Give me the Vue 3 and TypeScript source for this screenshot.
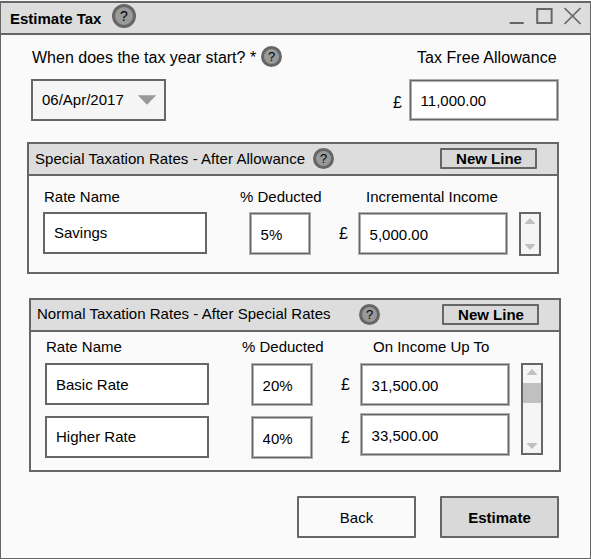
<script setup lang="ts">
import { reactive } from 'vue'

interface RateRow {
  name: string
  percent: string
  amount: string
}

interface RatePanel {
  id: string
  title: string
  amountLabel: string
  rows: RateRow[]
}

const form = reactive({ start: '06/Apr/2017', allowance: '11,000.00' })

const panels = reactive<RatePanel[]>([
  {
    id: 'special',
    title: 'Special Taxation Rates - After Allowance',
    amountLabel: 'Incremental Income',
    rows: [{ name: 'Savings', percent: '5%', amount: '5,000.00' }],
  },
  {
    id: 'normal',
    title: 'Normal Taxation Rates - After Special Rates',
    amountLabel: 'On Income Up To',
    rows: [
      { name: 'Basic Rate', percent: '20%', amount: '31,500.00' },
      { name: 'Higher Rate', percent: '40%', amount: '33,500.00' },
    ],
  },
])

function addLine(panel: RatePanel): void {
  panel.rows.push({ name: '', percent: '', amount: '' })
}
</script>

<template>
  <div class="window">
    <header class="titlebar">
      <h1>Estimate Tax</h1>
      <span class="help large">?</span>
      <svg class="controls" width="74" height="22" viewBox="0 0 74 22">
        <path d="M1.7 19H15.7" />
        <path d="M29.2 5H43.6V19H29.2Z" />
        <path d="M56.5 4L72.5 20M72.5 4L56.5 20" class="thin" />
      </svg>
    </header>

    <main>
      <div class="top-labels">
        <span>When does the tax year start? *</span>
        <span class="help">?</span>
        <span class="allowance-label">Tax Free Allowance</span>
      </div>

      <div class="top-fields">
        <button class="select">
          <span>{{ form.start }}</span>
          <svg width="20" height="10" viewBox="0 0 20 10"><path d="M0.8 0.2H19.2L10 9.8Z" fill="#999" /></svg>
        </button>
        <span class="pound">£</span>
        <input v-model="form.allowance" class="field soft" />
      </div>

      <section v-for="panel in panels" :key="panel.id" class="panel" :class="panel.id">
        <div class="panel-head">
          <h2>{{ panel.title }}</h2>
          <span class="help">?</span>
          <button class="new-line" @click="addLine(panel)">New Line</button>
        </div>
        <div class="column-labels">
          <span>Rate Name</span>
          <span>% Deducted</span>
          <span>{{ panel.amountLabel }}</span>
        </div>
        <div class="table">
          <div class="rows">
            <div v-for="(row, i) in panel.rows" :key="i" class="row">
              <input v-model="row.name" class="field name" />
              <input v-model="row.percent" class="field soft percent" />
              <span class="pound">£</span>
              <input v-model="row.amount" class="field soft amount" />
            </div>
          </div>
          <div class="scrollbar">
            <svg width="10" height="6" viewBox="0 0 10 6"><path d="M0 6V5.2L5 0L10 5.2V6Z" fill="#c0c0c0" /></svg>
            <div v-if="panel.rows.length > 1" class="thumb"></div>
            <svg class="down" width="10" height="6" viewBox="0 0 10 6"><path d="M0 0V0.8L5 6L10 0.8V0Z" fill="#c0c0c0" /></svg>
          </div>
        </div>
      </section>

      <footer>
        <button class="action">Back</button>
        <button class="action primary">Estimate</button>
      </footer>
    </main>
  </div>
</template>

<style>
body {
  background: #fafafa;
}
</style>

<style scoped>
* {
  box-sizing: border-box;
}

.window {
  width: 591px;
  height: 558px;
  margin-top: 1px;
  overflow: hidden;
  border: 1px solid #666;
  border-top-width: 2px;
  background: #fafafa;
  color: #000;
  font: 15px/18px 'Liberation Sans', Arial, sans-serif;
}

button,
input {
  font: inherit;
  color: inherit;
  margin: 0;
  outline: none;
}

h1,
h2 {
  margin: 0;
  font-size: 15px;
}

h2 {
  font-weight: 400;
  letter-spacing: 0.05px;
}

.titlebar {
  display: flex;
  height: 32px;
  padding: 0 9px;
  background: #ddd;
  border-bottom: 2px solid #666;
}

.titlebar h1 {
  width: 102px;
  padding-top: 7px;
}

.controls {
  margin-left: auto;
  margin-top: 1px;
  margin-right: -1px;
  fill: none;
  stroke: #666;
  stroke-width: 2;
}

.thin {
  stroke-width: 1.7;
}

.help {
  flex: none;
  width: 21px;
  height: 21px;
  border: 3px solid #666;
  border-radius: 50%;
  background: #999;
  font-size: 13px;
  line-height: 15px;
  text-align: center;
}

.help.large {
  width: 24px;
  height: 24px;
  margin-top: 1px;
  font-size: 14px;
  line-height: 18px;
}

.top-labels {
  display: flex;
  padding: 11px 0 0 31px;
  height: 44px;
  font-size: 16px;
}

.top-labels > span:first-child {
  width: 229px;
  padding-top: 3px;
}

.allowance-label {
  margin-left: 135px;
  padding-top: 3px;
  letter-spacing: 0.05px;
}

.top-fields {
  display: flex;
  padding-left: 30px;
}

.select {
  display: flex;
  align-items: center;
  justify-content: space-between;
  width: 135px;
  height: 42px;
  padding: 0 7px 0 9px;
  border: 2px solid #666;
  background: #f5f5f5;
}

.top-fields .pound {
  width: 16px;
  margin-left: 227px;
  padding-top: 15px;
}

.top-fields .field {
  width: 150px;
}

.pound {
  font-size: 16px;
}

.field {
  width: 164px;
  height: 42px;
  padding: 0 9px;
  border: 2px solid #666;
  border-radius: 0;
  background: #fff;
}

.field.soft {
  border: 1px solid #b0b0b0;
  box-shadow: inset 0 0 0 1px #666, inset 0 0 0 2px #b2b2b2;
  padding: 1px 10px 0 10.6px;
}

.panel {
  width: 532px;
  height: 132px;
  margin: 21px 0 0 26px;
  border: 2px solid #666;
}

.panel.normal {
  height: 174px;
  margin: 24px 0 0 28px;
}

.panel-head {
  display: flex;
  height: 32px;
  padding-left: 6px;
  background: #ddd;
  border-bottom: 2px solid #666;
}

.panel-head h2 {
  width: 278px;
  padding-top: 6px;
}

.panel-head .help {
  margin-top: 4px;
}

.normal .panel-head h2 {
  width: 322px;
  padding-top: 5px;
  letter-spacing: 0.03px;
}

.new-line {
  width: 97px;
  height: 21px;
  margin: 4px 20px 0 auto;
  padding: 0 0 0 1px;
  border: 2px solid #666;
  border-radius: 1px;
  background: #d9d9d9;
  font-weight: 700;
  line-height: 17px;
}

.column-labels {
  display: grid;
  grid-template-columns: 196px 126px auto;
  height: 36px;
  padding: 12px 0 0 15px;
}

.normal .column-labels {
  grid-template-columns: 196px 131px auto;
  height: 31px;
  padding-top: 6px;
}

.table {
  display: flex;
  padding-left: 14px;
}

.row {
  display: flex;
  height: 53px;
}

.special .name,
.row + .row .name {
  padding-bottom: 2px;
}

.percent {
  width: 62px;
  height: 43px;
  margin-left: 42px;
}

.row .pound {
  width: 19px;
  margin-left: 28px;
  padding-top: 13px;
}

.row + .row .pound {
  padding-top: 12.5px;
}

.amount {
  width: 150px;
  height: 43px;
}

.row + .row .amount {
  margin-top: -3px;
}

.scrollbar {
  display: flex;
  flex-direction: column;
  align-items: center;
  width: 22px;
  height: 44px;
  margin-left: 11px;
  padding: 4px 0;
  border: 2px solid #666;
  background: #f5f5f5;
}

.normal .scrollbar {
  height: 92px;
}

.thumb {
  width: 18px;
  height: 20px;
  margin-top: 8px;
  background: #c0c0c0;
}

.down {
  margin-top: auto;
}

footer {
  display: flex;
  gap: 24px;
  padding: 24px 0 0 296px;
}

.action {
  width: 119px;
  height: 42px;
  padding: 2px 0 0;
  border: 2px solid #666;
  border-radius: 1px;
  background: #fafafa;
}

.action.primary {
  background: #d9d9d9;
  font-weight: 700;
}
</style>
